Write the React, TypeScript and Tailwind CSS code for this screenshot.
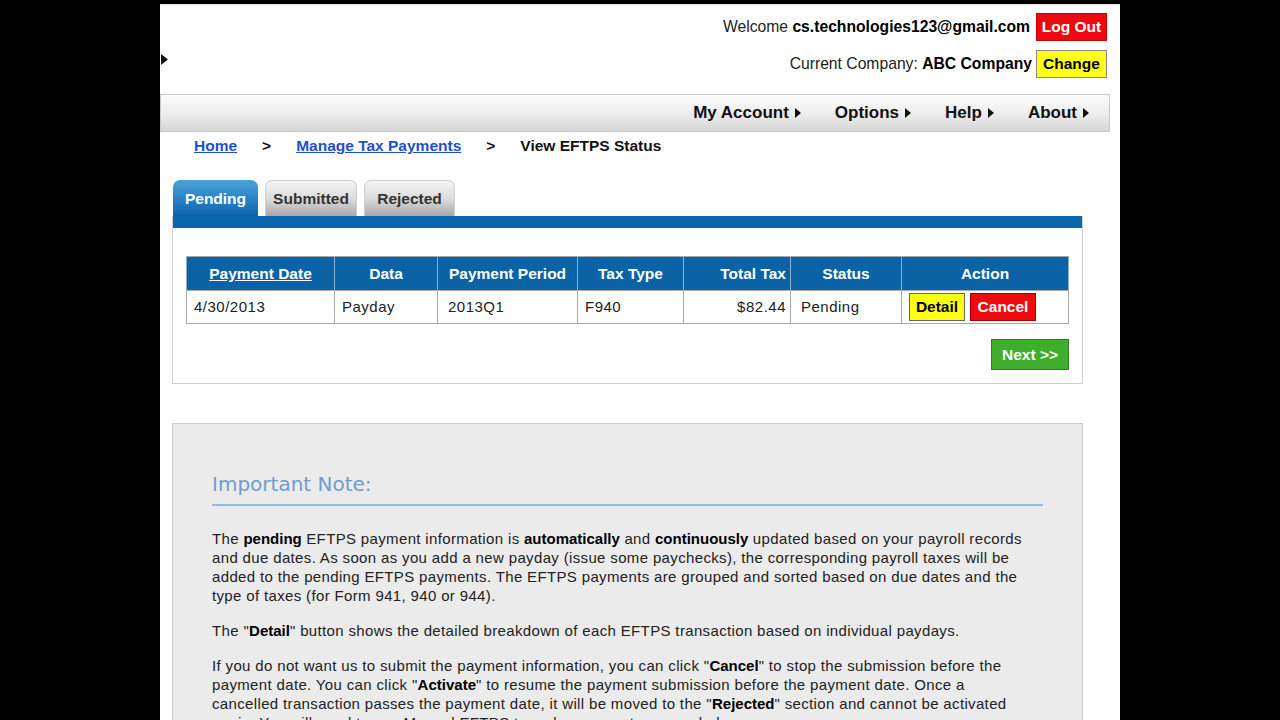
import React from 'react';

const Caret = () => (
  <svg width="6" height="10" viewBox="0 0 6 10" className="inline-block ml-[6px]">
    <path d="M0 0 L6 5 L0 10 Z" fill="#111" />
  </svg>
);

const navItems = ['My Account', 'Options', 'Help', 'About'];

const columns = [
  { label: 'Payment Date', w: 'w-[148px]', link: true },
  { label: 'Data', w: 'w-[103px]' },
  { label: 'Payment Period', w: 'w-[140px]' },
  { label: 'Tax Type', w: 'w-[106px]' },
  { label: 'Total Tax', w: 'w-[107px]', right: true },
  { label: 'Status', w: 'w-[111px]' },
  { label: 'Action', w: '' },
];

export default function App() {
  return (
    <div className="h-screen w-full overflow-hidden bg-black flex items-start font-['Liberation_Sans',Arial,sans-serif] text-[#222]">
      <div className="w-[160px] shrink-0" />
      <main className="w-[960px] shrink-0 mt-[4px] min-h-[716px] bg-white border-t border-[#e0e0e0]">
        {/* account header */}
        <header className="relative flex flex-col items-end gap-[9px] pt-[8px] pr-[13px]">
          <div className="flex items-center gap-[6px] h-[28px]">
            <span className="text-[15.7px] text-[#222]">
              Welcome <b className="text-black">cs.technologies123@gmail.com</b>
            </span>
            <button className="h-[28px] w-[71px] bg-[#ec0a10] text-white font-bold text-[15.5px] border border-[#c00]">Log Out</button>
          </div>
          <div className="flex items-center gap-[4px] h-[28px]">
            <span className="text-[15.7px] text-[#222]">
              Current Company: <b className="text-black">ABC Company</b>
            </span>
            <button className="h-[28px] w-[71px] bg-[#ffff1a] text-black font-bold text-[15.5px] border border-[#888]">Change</button>
          </div>
          <svg width="7" height="11" viewBox="0 0 7 11" className="absolute left-[1px] top-[49px]">
            <path d="M0 0 L7 5.5 L0 11 Z" fill="#111" />
          </svg>
        </header>

        {/* menu bar */}
        <nav className="mt-[16px] mr-[10px] h-[38px] border border-[#c9c9c9] bg-gradient-to-b from-[#fbfbfb] via-[#eeeeee] to-[#d6d6d6] flex items-center justify-end gap-[34px] pr-[20px]">
          {navItems.map((n) => (
            <span key={n} className="font-bold text-[17px] text-[#111] flex items-center">
              {n}
              <Caret />
            </span>
          ))}
        </nav>

        {/* breadcrumb */}
        <div className="flex items-center h-[18px] mt-[5px] pl-[34px] text-[15.5px] font-bold">
          <a className="text-[#1f4fcf] underline">Home</a>
          <span className="ml-[25px] text-[#111]">&gt;</span>
          <a className="ml-[25px] text-[#1f4fcf] underline">Manage Tax Payments</a>
          <span className="ml-[25px] text-[#111]">&gt;</span>
          <span className="ml-[25px] text-[#111]">View EFTPS Status</span>
        </div>

        {/* tabs */}
        <div className="mt-[25px] ml-[12px] w-[911px]">
          <div className="flex items-end gap-[7px] pl-[1px] h-[36px]">
            <div className="h-[36px] w-[85px] rounded-t-[7px] bg-gradient-to-b from-[#4aa3dc] to-[#0864ad] text-white font-bold text-[15.5px] flex items-center justify-center pt-[1px]">Pending</div>
            <div className="h-[36px] w-[92px] rounded-t-[7px] border border-[#cfcfcf] border-b-0 bg-gradient-to-b from-[#f4f4f4] via-[#dcdcdc] to-[#a9a9a9] text-[#333] font-bold text-[15.5px] flex items-center justify-center">Submitted</div>
            <div className="h-[36px] w-[91px] rounded-t-[7px] border border-[#cfcfcf] border-b-0 bg-gradient-to-b from-[#f4f4f4] via-[#dcdcdc] to-[#a9a9a9] text-[#333] font-bold text-[15.5px] flex items-center justify-center">Rejected</div>
          </div>
          <div className="border border-[#d0d0d0] border-t-0">
            <div className="h-[12px] bg-[#0a66ad]" />
            <div className="px-[13px] pt-[28px] pb-[13px]">
              <table className="w-full border-collapse border border-[#a9a9a9] text-[15px]">
                <thead>
                  <tr className="h-[34px] bg-[#0b63a5] text-white">
                    {columns.map((c) => (
                      <th
                        key={c.label}
                        className={`${c.w} border-x border-[#8fb2d1] font-bold text-[15.5px] ${c.right ? 'text-right pr-[4px]' : 'text-center'}`}
                      >
                        {c.link ? <span className="underline">{c.label}</span> : c.label}
                      </th>
                    ))}
                  </tr>
                </thead>
                <tbody>
                  <tr className="h-[33px] text-[#222] tracking-[0.5px]">
                    <td className="border border-[#a9a9a9] pl-[7px]">4/30/2013</td>
                    <td className="border border-[#a9a9a9] pl-[7px]">Payday</td>
                    <td className="border border-[#a9a9a9] pl-[10px]">2013Q1</td>
                    <td className="border border-[#a9a9a9] pl-[7px]">F940</td>
                    <td className="border border-[#a9a9a9] pr-[4px] text-right">$82.44</td>
                    <td className="border border-[#a9a9a9] pl-[10px]">Pending</td>
                    <td className="border border-[#a9a9a9] pl-[7px]">
                      <div className="flex gap-[5px] tracking-normal">
                        <button className="h-[28px] w-[56px] bg-[#ffff14] border border-[#666] font-bold text-black text-[15.5px]">Detail</button>
                        <button className="h-[28px] w-[66px] bg-[#ee0b10] border border-[#a00] font-bold text-white text-[15.5px]">Cancel</button>
                      </div>
                    </td>
                  </tr>
                </tbody>
              </table>
              <div className="flex justify-end mt-[15px]">
                <button className="h-[31px] w-[78px] bg-[#3fae2c] border border-[#2d7d20] text-white font-bold text-[15.5px]">Next &gt;&gt;</button>
              </div>
            </div>
          </div>
        </div>

        {/* note box */}
        <section className="mt-[39px] ml-[12px] w-[911px] bg-[#ebebeb] border border-[#cdcdcd] px-[39px] pt-[51px] text-[15px] leading-[19px] tracking-[0.35px] text-[#222]">
          <h2 className="font-['DejaVu_Sans',Verdana,sans-serif] text-[20px] tracking-normal text-[#6f9dcd] pb-[10px] border-b-2 border-[#9bb9da] w-[831px]">Important Note:</h2>
          <p className="mt-[23px]">
            The <b className="text-black tracking-normal">pending</b> EFTPS payment information is <b className="text-black tracking-normal">automatically</b> and <b className="text-black tracking-normal">continuously</b> updated based on your payroll records and due dates. As soon as you add a new payday (issue some paychecks), the corresponding payroll taxes will be added to the pending EFTPS payments. The EFTPS payments are grouped and sorted based on due dates and the type of taxes (for Form 941, 940 or 944).
          </p>
          <p className="mt-[16px]">
            The "<b className="text-black tracking-normal">Detail</b>" button shows the detailed breakdown of each EFTPS transaction based on individual paydays.
          </p>
          <p className="mt-[16px] pr-[30px]">
            If you do not want us to submit the payment information, you can click "<b className="text-black tracking-normal">Cancel</b>" to stop the submission before the payment date. You can click "<b className="text-black tracking-normal">Activate</b>" to resume the payment submission before the payment date. Once a cancelled transaction passes the payment date, it will be moved to the "<b className="text-black tracking-normal">Rejected</b>" section and cannot be activated again. You will need to use Manual EFTPS to make payments as needed.
          </p>
        </section>
      </main>
    </div>
  );
}
